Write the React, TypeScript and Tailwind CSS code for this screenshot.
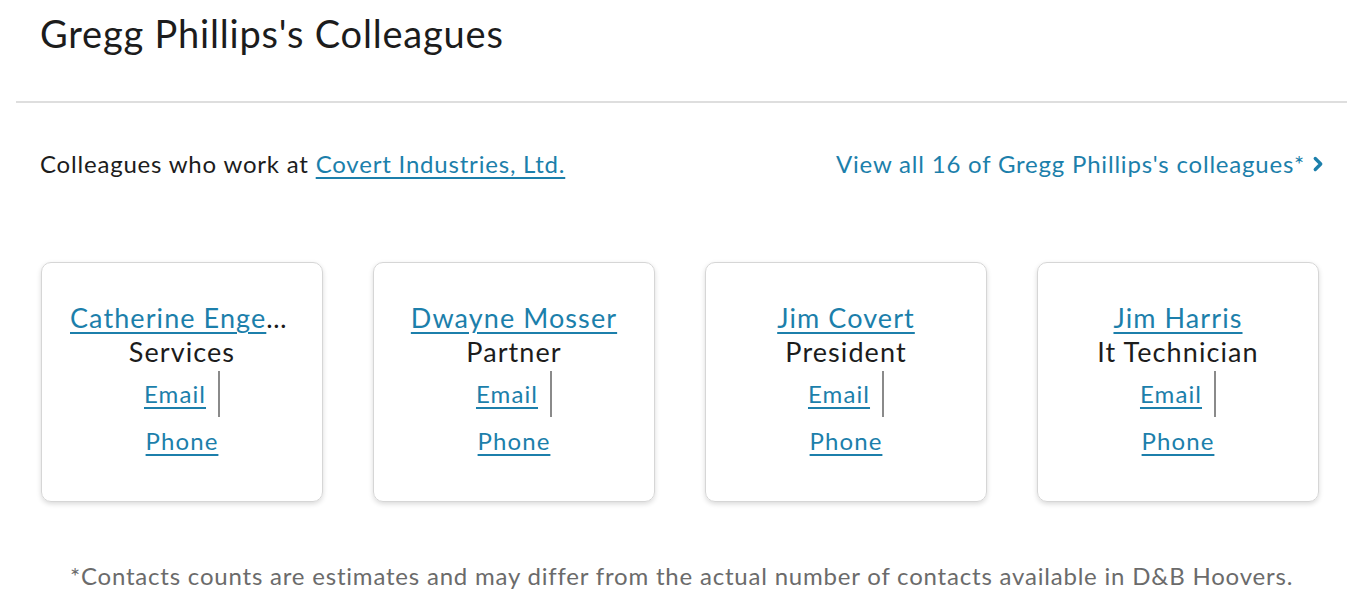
import { ChevronRight } from "lucide-react";

const colleagues = [
  { name: "Catherine Engelbrecht", title: "Services" },
  { name: "Dwayne Mosser", title: "Partner" },
  { name: "Jim Covert", title: "President" },
  { name: "Jim Harris", title: "It Technician" },
];

export default function App() {
  return (
    <div
      className="min-h-screen bg-white tracking-[0.05em] text-[#1c1c1c]"
      style={{ fontFamily: "Lato, 'Open Sans', sans-serif" }}
    >
      {/* header */}
      <div className="px-10 pt-[11px] pb-[46px]">
        <h1 className="text-[38px] leading-[44px]">Gregg Phillips's Colleagues</h1>
      </div>
      <div className="mx-4 h-[2px] bg-[#dedede]" />

      {/* sub header */}
      <div className="flex items-center justify-between px-10 pt-[43px] text-[24px] leading-[36px]">
        <p>
          Colleagues who work at{" "}
          <a href="#" className="text-[#1c7fab] underline underline-offset-4">
            Covert Industries, Ltd.
          </a>
        </p>
        <a href="#" className="flex items-center gap-0.5 text-[#1c7fab]">
          View all 16 of Gregg Phillips's colleagues*
          <ChevronRight className="-mr-[6px] h-[22px] w-[22px]" strokeWidth={3.6} />
        </a>
      </div>

      {/* cards */}
      <div className="grid grid-cols-4 gap-[50px] pl-[41px] pr-[44px] pt-[80px]">
        {colleagues.map((c) => (
          <div
            key={c.name}
            className="flex h-[240px] flex-col items-center rounded-[10px] border border-[#d6d6d6] px-7 pt-[38px] text-[27px] leading-[34px] tracking-[0.04em] shadow-[0_2px_5px_rgba(0,0,0,0.15)]"
          >
            <div className="w-full truncate text-center">
              <a href="#" className="text-[#1c7fab] underline underline-offset-4">
                {c.name}
              </a>
            </div>
            <div>{c.title}</div>
            <div className="mt-[2px] flex flex-col items-center text-[24px]">
              <div className="flex h-[46px] items-center">
                <a href="#" className="border-r-2 border-[#8a8a8a] pr-3 leading-[46px] text-[#1c7fab] underline underline-offset-4">
                  Email
                </a>
              </div>
              <a href="#" className="leading-[48px] text-[#1c7fab] underline underline-offset-4">
                Phone
              </a>
            </div>
          </div>
        ))}
      </div>

      {/* footnote */}
      <p className="pt-[56px] text-center text-[24px] text-[#6b6b6b]">
        *Contacts counts are estimates and may differ from the actual number of contacts available in D&amp;B Hoovers.
      </p>
    </div>
  );
}
